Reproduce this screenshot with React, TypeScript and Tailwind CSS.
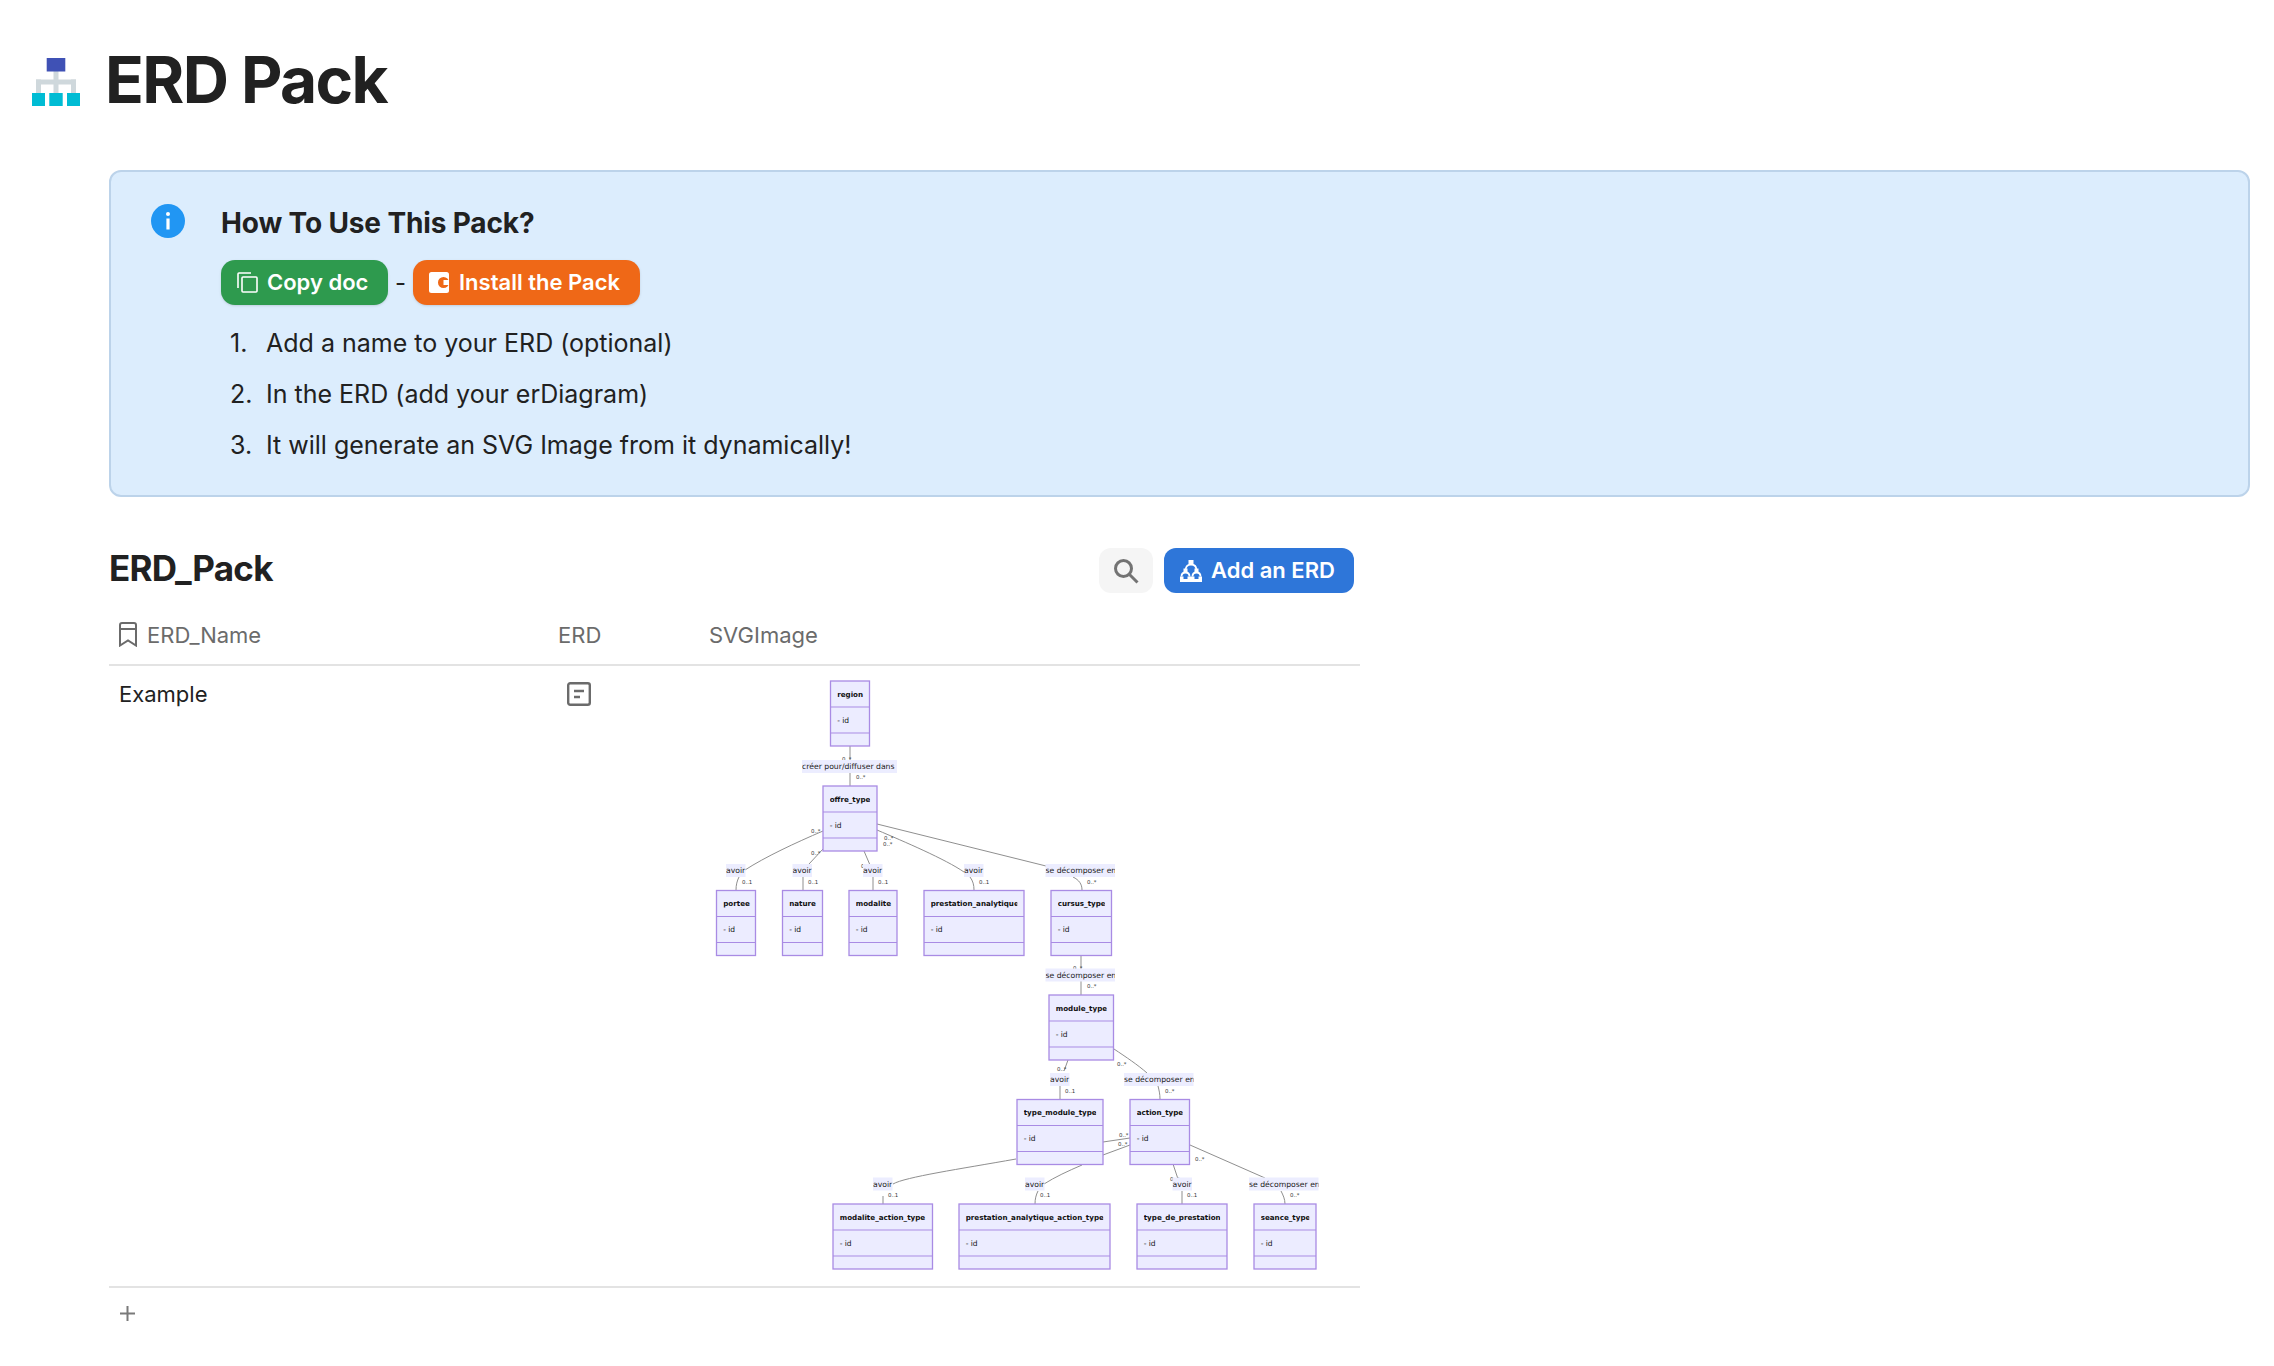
const boxes = [
  { name: "region", x: 830.5, y: 682, w: 39 },
  { name: "offre_type", x: 823, y: 787, w: 54 },
  { name: "portee", x: 716.5, y: 891.5, w: 39 },
  { name: "nature", x: 782.5, y: 891.5, w: 40 },
  { name: "modalite", x: 849, y: 891.5, w: 48 },
  { name: "prestation_analytique", x: 924, y: 891.5, w: 100 },
  { name: "cursus_type", x: 1051, y: 891.5, w: 60.5 },
  { name: "module_type", x: 1049, y: 996, w: 64.5 },
  { name: "type_module_type", x: 1017, y: 1100.5, w: 86 },
  { name: "action_type", x: 1130, y: 1100.5, w: 59.5 },
  { name: "modalite_action_type", x: 833, y: 1205, w: 99.5 },
  { name: "prestation_analytique_action_type", x: 959, y: 1205, w: 151 },
  { name: "type_de_prestation", x: 1137, y: 1205, w: 90 },
  { name: "seance_type", x: 1254, y: 1205, w: 62 },
]

const edges = [
  "M850 747 L850 787",
  "M823 832 C795 844 765 858 745 871 M739 878 C737 882 736 886 736 891",
  "M823 850 L809 865 M803 878 L803 891",
  "M864 852 L870 866 M873 878 L873 891",
  "M877 831 C905 843 945 860 964 873 M970 878 C973 882 974 886 974 891",
  "M877 825 L1046 867 M1073 878 C1079 881 1082 885 1082 891",
  "M1081 956 L1081 996",
  "M1068 1061 L1064 1072 M1060 1087 L1060 1100",
  "M1114 1050 C1126 1058 1138 1066 1147 1074 M1158 1087 C1159 1091 1160 1095 1160 1100",
  "M1103 1143 L1130 1139",
  "M1103 1156 L1130 1146",
  "M1016 1160 C960 1170 905 1178 893 1185 M883 1197 L883 1205",
  "M1082 1166 C1068 1172 1055 1178 1044 1185 M1038 1192 C1036 1196 1035 1200 1035 1205",
  "M1173 1165 L1178 1180 M1182 1192 L1182 1205",
  "M1190 1146 L1265 1179 M1281 1192 C1283 1196 1285 1200 1285 1205",
]

const cards = [
  ["0..*", 842, 760], ["0..*", 856, 778], ["0..*", 811, 832], ["0..1", 742, 883],
  ["0..*", 811, 854], ["0..1", 808, 883], ["0..*", 861, 867], ["0..1", 878, 883],
  ["0..*", 884, 839], ["0..*", 883, 845], ["0..1", 979, 883], ["0..*", 1087, 883],
  ["0..*", 1073, 969], ["0..*", 1087, 987], ["0..*", 1057, 1070], ["0..1", 1065, 1092],
  ["0..*", 1117, 1065], ["0..*", 1165, 1092], ["0..*", 1119, 1136], ["0..*", 1118, 1145],
  ["0..*", 1195, 1160], ["0..1", 888, 1196], ["0..1", 1040, 1196], ["0..*", 1170, 1180],
  ["0..1", 1187, 1196], ["0..*", 1290, 1196],
] as const

const labels = [
  { text: "créer pour/diffuser dans", x: 802, y: 761, w: 95 },
  { text: "avoir", x: 726, y: 865, w: 19.5 },
  { text: "avoir", x: 792.5, y: 865, w: 19.5 },
  { text: "avoir", x: 863, y: 865, w: 19.5 },
  { text: "avoir", x: 964, y: 865, w: 19.5 },
  { text: "se décomposer en", x: 1045.5, y: 865, w: 69.5 },
  { text: "se décomposer en", x: 1045.5, y: 969.5, w: 69.5 },
  { text: "avoir", x: 1050, y: 1074, w: 19.5 },
  { text: "se décomposer en", x: 1124, y: 1074, w: 69.5 },
  { text: "avoir", x: 873, y: 1178.5, w: 19.5 },
  { text: "avoir", x: 1025, y: 1178.5, w: 19.5 },
  { text: "avoir", x: 1172.5, y: 1178.5, w: 19.5 },
  { text: "se décomposer en", x: 1249, y: 1178.5, w: 69.5 },
]

const steps = [
  "Add a name to your ERD (optional)",
  "In the ERD (add your erDiagram)",
  "It will generate an SVG Image from it dynamically!",
]

function ErDiagram() {
  return (
    <svg width="620" height="610" viewBox="709 670 620 610" className="block font-['DejaVu_Sans',sans-serif]">
      <g fill="none" stroke="#8f8f8f" strokeWidth="1">
        {edges.map((d) => (
          <path key={d} d={d} />
        ))}
      </g>
      {cards.map(([t, x, y], i) => (
        <text key={i} x={x} y={y + 2} fontSize="5.4" fill="#333">
          {t}
        </text>
      ))}
      {labels.map((l, i) => (
        <g key={i}>
          <rect x={l.x} y={l.y} width={l.w} height="13" fill="#ecedff" />
          <svg x={l.x} y={l.y} width={l.w} height="13">
            <text x="0" y="9.4" fontSize="7.7" fill="#222">
              {l.text}
            </text>
          </svg>
        </g>
      ))}
      {boxes.map((b) => (
        <g key={b.name}>
          <rect x={b.x} y={b.y} width={b.w} height="65" fill="#ececff" stroke="#a98be4" strokeWidth="1.3" />
          <path d={`M${b.x} ${b.y + 26}h${b.w}M${b.x} ${b.y + 52}h${b.w}`} stroke="#a98be4" strokeWidth="1" />
          <svg x={b.x + 6.7} y={b.y} width={b.w < 49 ? b.w - 10 : b.w - 13.4} height="26">
            <text x="0" y="15.5" fontSize="7.15" fontWeight="700" fill="#111">
              {b.name}
            </text>
          </svg>
          <text x={b.x + 6.7} y={b.y + 41.5} fontSize="7.5" fill="#111">
            - id
          </text>
        </g>
      ))}
    </svg>
  )
}

function PackLogo() {
  return (
    <svg width="48" height="48" viewBox="0 0 48 48" className="shrink-0 mt-[4px]">
      <path d="M21.5 12h5v23h-5zM4 21.5h40v5H4z" fill="#cfd8dc" />
      <path d="M4 21.5h5v14H4zM39 21.5h5v14h-5z" fill="#cfd8dc" />
      <rect x="14.7" y="0" width="18.6" height="13.5" fill="#3f51b5" />
      <path d="M0 35h13v13H0zM17.3 35h13.4v13H17.3zM35 35h13v13H35z" fill="#00bcd4" />
    </svg>
  )
}

function CopyIcon() {
  return (
    <svg width="21" height="21" viewBox="0 0 21 21" fill="none" stroke="#fff" strokeWidth="1.6" className="shrink-0">
      <path d="M1 16V2a1 1 0 0 1 1-1h12" />
      <rect x="5" y="5" width="15" height="15" rx="1" />
    </svg>
  )
}

function InstallIcon() {
  return (
    <svg width="20" height="21" viewBox="0 0 20 21" className="shrink-0">
      <rect width="20" height="21" rx="2.5" fill="#fff" />
      <circle cx="14.5" cy="10.5" r="5.5" fill="#ef6817" />
      <rect x="14.5" y="8" width="5.5" height="5" fill="#fff" />
    </svg>
  )
}

function TreeIcon() {
  return (
    <svg width="22" height="22" viewBox="0 0 22 22" fill="#fff" className="shrink-0">
      <rect x="8.5" y="0" width="5" height="4" />
      <path d="M5.5 10.5C5.5 6.5 8 4.5 11 4.5S16.5 6.5 16.5 10.5" stroke="#fff" strokeWidth="1.8" fill="none" />
      <rect x="3.5" y="8.5" width="4" height="4" />
      <rect x="14.5" y="8.5" width="4" height="4" />
      <path d="M1.5 16.5C1.5 13.5 3 12.5 5.5 12.5S9.5 13.5 9.5 16.5M12.5 16.5C12.5 13.5 14 12.5 16.5 12.5S20.5 13.5 20.5 16.5" stroke="#fff" strokeWidth="1.8" fill="none" />
      <path d="M0 22v-5.5h3.5V22zM3.5 22h4v-3h-4zM7.5 22v-5.5H11V22zM11 22v-5.5h3.5V22zM14.5 22h4v-3h-4zM18.5 22v-5.5H22V22z" />
    </svg>
  )
}

function App() {
  return (
    <div className="w-full bg-white font-[Inter,sans-serif] text-[#212121] pb-[30px]">
      <header className="flex items-center h-[160px] mb-[10px] pl-[32px] gap-[25px]">
        <PackLogo />
        <h1 className="text-[64px] font-bold tracking-[-0.025em] leading-none">ERD Pack</h1>
      </header>

      <section className="ml-[109px] mr-[24px] h-[327px] rounded-[12px] border-2 border-[#bcd3ea] bg-[#dcedfd] flex pl-[40px] pt-[32px] gap-[36px]">
        <svg width="34" height="34" viewBox="0 0 34 34" className="shrink-0">
          <circle cx="17" cy="17" r="17" fill="#2196f3" />
          <rect x="15.4" y="14.5" width="3.2" height="11" fill="#fff" />
          <circle cx="17" cy="10" r="2" fill="#fff" />
        </svg>
        <div>
          <h3 className="text-[28px] leading-[38px] font-bold tracking-[-0.005em]">How To Use This Pack?</h3>
          <div className="flex items-center mt-[18px] h-[45px]">
            <button className="h-full w-[167px] rounded-[14px] bg-[#2e9a4e] text-white text-[22px] font-semibold flex items-center pl-[16px] gap-[9px] shadow-sm">
              <CopyIcon />
              Copy doc
            </button>
            <span className="w-[25px] text-center text-[24px]">-</span>
            <button className="h-full w-[227px] rounded-[14px] bg-[#ef6817] text-white text-[22px] font-semibold flex items-center pl-[16px] gap-[10px] shadow-sm">
              <InstallIcon />
              Install the Pack
            </button>
          </div>
          <ol className="mt-[13px] text-[25px] leading-[51px]">
            {steps.map((step, i) => (
              <li key={step} className="flex">
                <span className="w-[45px] pl-[9px]">{i + 1}.</span>
                {step}
              </li>
            ))}
          </ol>
        </div>
      </section>

      <section className="ml-[109px] w-[1251px] mt-[51px]">
        <div className="flex items-center justify-between h-[45px] pr-[6px]">
          <h2 className="text-[35px] font-bold tracking-[-0.02em] -mt-[4px]">ERD_Pack</h2>
          <div className="flex items-center gap-[11px] h-full">
            <button className="w-[54px] h-full rounded-[12px] bg-[#f5f5f5] flex items-center justify-center">
              <svg width="26" height="26" viewBox="0 0 26 26" fill="none" stroke="#737373" strokeWidth="3">
                <circle cx="10.5" cy="10.5" r="8" />
                <path d="M16.5 16.5L24.5 24.5" />
              </svg>
            </button>
            <button className="w-[190px] h-full rounded-[12px] bg-[#2e76d9] text-white text-[22px] font-semibold flex items-center pl-[16px] gap-[9px]">
              <TreeIcon />
              Add an ERD
            </button>
          </div>
        </div>

        <div className="grid grid-cols-[440px_150px_1fr] h-[73px] border-b-2 border-[#e3e3e3] text-[#6b6b6b] text-[22px] pt-[25px]">
          <div className="flex items-start gap-[10px] pl-[10px] leading-[34px]">
            <svg width="18" height="25" viewBox="0 0 18 25" fill="none" stroke="#6b6b6b" strokeWidth="2" className="mt-[4px]">
              <path d="M1 23.5V3a2 2 0 0 1 2-2h12a2 2 0 0 1 2 2v20.5l-8-5z" />
              <path d="M1 7h16" />
            </svg>
            ERD_Name
          </div>
          <div className="pl-[9px] leading-[34px]">ERD</div>
          <div className="pl-[10px] leading-[34px]">SVGImage</div>
        </div>

        <div className="grid grid-cols-[440px_150px_1fr] h-[622px] border-b-2 border-[#e3e3e3]">
          <div className="pl-[10px] pt-[12px] text-[22px] leading-[32px]">Example</div>
          <div className="pl-[18px] pt-[16px]">
            <svg width="24" height="24" viewBox="0 0 24 24" fill="none" stroke="#6b6b6b" strokeWidth="2.4">
              <rect x="1.2" y="1.2" width="21.6" height="21.6" rx="2" />
              <path d="M7 9h10M7 15h6" />
            </svg>
          </div>
          <div className="pl-[10px] pt-[3px]">
            <ErDiagram />
          </div>
        </div>

        <div className="pl-[11px] pt-[18px]">
          <svg width="15" height="15" viewBox="0 0 15 15" stroke="#7a7a7a" strokeWidth="2">
            <path d="M7.5 0v15M0 7.5h15" />
          </svg>
        </div>
      </section>
    </div>
  )
}

export default App
